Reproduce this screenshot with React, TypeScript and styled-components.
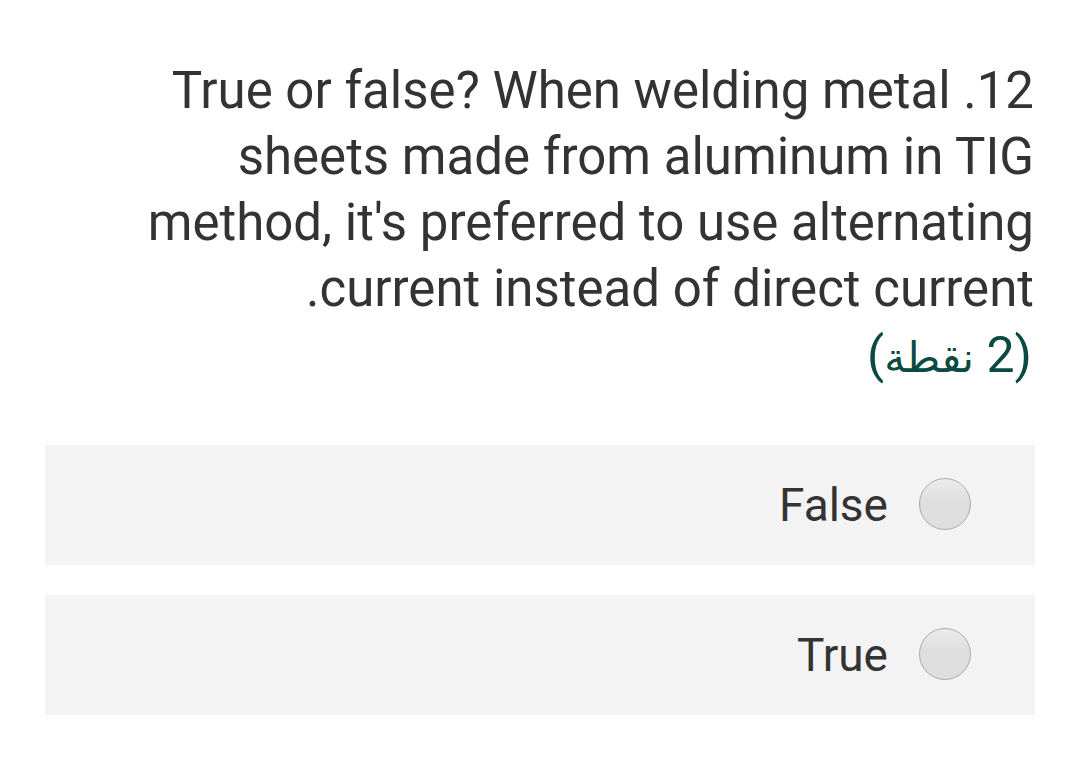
import styled, { createGlobalStyle } from "styled-components";

const GlobalStyle = createGlobalStyle`
  html, body {
    margin: 0;
    padding: 0;
    background: #ffffff;
  }
  body {
    font-family: Roboto, "Noto Sans", "Liberation Sans", sans-serif;
  }
`;

const Page = styled.div`
  padding: 58px 45px 40px 45px;
  display: flex;
  flex-direction: column;
`;

const Question = styled.div`
  text-align: right;
  padding-right: 1px;
  font-size: 51px;
  line-height: 66px;
  color: #333333;
`;

const Line = styled.div`
  white-space: nowrap;
`;

const Points = styled.div`
  direction: rtl;
  text-align: right;
  padding-right: 3px;
  font-size: 50px;
  line-height: 66px;
  color: #0b4a42;
  font-family: Roboto, "DejaVu Sans", sans-serif;
`;

const ArabicWord = styled.span`
  font-family: "DejaVu Sans", sans-serif;
  font-size: 42px;
`;

const Options = styled.div`
  margin-top: 54px;
  display: flex;
  flex-direction: column;
  gap: 30px;
`;

const Option = styled.label`
  height: 120px;
  background: #f3f3f3;
  display: flex;
  align-items: center;
  justify-content: flex-end;
  padding-right: 64px;
  gap: 31px;
`;

const OptionText = styled.span`
  font-size: 46px;
  color: #333333;
`;

const Radio = styled.span`
  width: 50px;
  height: 50px;
  margin-top: -2px;
  border-radius: 50%;
  border: 1px solid #aaaaaa;
  background: linear-gradient(#ececec, #dedede 45%, #dedede);
  box-sizing: content-box;
`;

const lines = [
  "True or false? When welding metal .12",
  "sheets made from aluminum in TIG",
  "method, it's preferred to use alternating",
  ".current instead of direct current",
];

export default function App() {
  return (
    <>
      <GlobalStyle />
      <Page>
        <Question>
          {lines.map((l) => (
            <Line key={l}>{l}</Line>
          ))}
        </Question>
        <Points>
          (2 <ArabicWord>نقطة</ArabicWord>)
        </Points>
        <Options>
          {["False", "True"].map((o) => (
            <Option key={o}>
              <OptionText>{o}</OptionText>
              <Radio />
            </Option>
          ))}
        </Options>
      </Page>
    </>
  );
}
